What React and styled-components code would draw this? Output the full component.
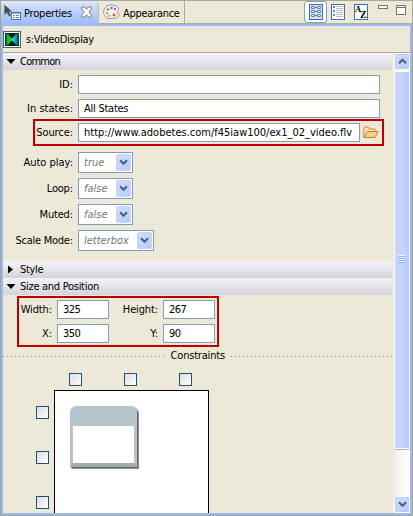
import React from "react";
import styled, { createGlobalStyle } from "styled-components";

const Global = createGlobalStyle`
  * { box-sizing: border-box; }
  html, body { margin: 0; padding: 0; overflow: hidden; }
  svg { display: block; flex: none; }
`;

const Frame = styled.div`
  width: 413px;
  height: 516px;
  display: flex;
  flex-direction: column;
  background: #ece9d8;
  border: 1px solid #a5a292;
  border-top-color: #aca899;
  color: #000;
  font: 11px/15px "DejaVu Sans Condensed", "DejaVu Sans", sans-serif;
  font-stretch: condensed;
  overflow: hidden;
`;

const Text = styled.span`
  white-space: nowrap;
  letter-spacing: ${(p) => p.$track || 0}px;
  margin-right: ${(p) => -(p.$track || 0)}px;
`;

const TabBar = styled.div`
  display: flex;
  height: 25px;
  flex: none;
`;

const ActiveTab = styled.div`
  width: 98px;
  height: 25px;
  display: flex;
  align-items: flex-start;
  padding: 3px 0 0 3px;
  border-top-left-radius: 3px;
  border-top-right-radius: 5px;
  border-right: 1px solid #c0bdae;
  background: linear-gradient(#dce6fb, #bad0fb 45%, #98b8f6);

  span { width: 50px; margin: 2px 7px 0 3px; }
  svg:last-child { margin-top: 2px; }
`;

const TabRest = styled.div`
  flex: 1;
  display: flex;
  align-items: flex-start;
  height: 25px;
  border-bottom: 2px solid #99b9f5;
  box-shadow: inset 0 -1px #b3ae9a;
`;

const Tab = styled.div`
  display: flex;
  width: 86px;
  height: 22px;
  padding: 3px 0 0 4px;
  border-right: 1px solid #aca899;

  span { margin: 2px 0 0 3px; }
`;

const Tools = styled.div`
  display: flex;
  align-items: center;
  flex: 1;
  height: 21px;
  padding-left: 119px;

  > svg:last-child { margin-bottom: 3px; }
`;

const Toggle = styled.div`
  width: 23px;
  height: 22px;
  display: grid;
  place-items: center;
  border: 1px solid #86a3bd;
  border-radius: 3px;
  background: #fff;
  margin: 0 4px 0 0;
`;

const ToolGap = styled.div`
  width: ${(p) => p.$w}px;
  flex: none;
`;

const Panel = styled.div`
  flex: 1;
  min-height: 0;
  display: flex;
  flex-direction: column;
  border: 2px solid #99b9f5;
  border-top: 0;
`;

const Title = styled.div`
  height: 26px;
  flex: none;
  display: flex;
  align-items: center;
  gap: 5px;
`;

const Body = styled.div`
  flex: 1;
  min-height: 0;
  display: flex;
  border-top: 1px solid #aca899;
`;

const Content = styled.div`
  width: 390px;
  overflow: hidden;
  display: flex;
  flex-direction: column;
`;

const Section = styled.div`
  height: 17px;
  flex: none;
  display: flex;
  align-items: center;
  margin-right: 1px;
  background: linear-gradient(#f4f4f7, #e5e4e9 50%, #d5d3dc);

  svg { margin: 0 4px 0 3px; }
`;

const Form = styled.div`
  display: flex;
  flex-direction: column;
  height: 191px;
  flex: none;
  padding-top: 5px;
`;

const Row = styled.div`
  display: flex;
  align-items: center;
  height: ${(p) => p.$h}px;
  margin-bottom: ${(p) => p.$gap || 0}px;
`;

const Label = styled.div`
  width: ${(p) => p.$w}px;
  display: flex;
  justify-content: flex-end;
  flex: none;
  margin-right: 5px;
`;

const SizeLabel = styled.div`
  display: flex;
  justify-content: flex-end;
`;

const Field = styled.div`
  width: ${(p) => p.$w}px;
  height: 19px;
  flex: none;
  padding: 1px 0 0 5px;
  border: 1px solid #7f9db9;
  background: #fff;
`;

const SourceBox = styled.div`
  display: flex;
  align-items: center;
  width: 351px;
  height: 27px;
  flex: none;
  margin: 1px 0 6px 30px;
  border: 2px solid #c00000;

  > svg { margin-left: 3px; }
`;

const Combo = styled.div`
  width: ${(p) => p.$w}px;
  height: 21px;
  flex: none;
  display: flex;
  justify-content: space-between;
  padding: 1px 1px 1px 5px;
  border: 1px solid #7f9db9;
  background: #fff;
  color: #777;
  font-style: italic;

  > span { margin-top: 1px; }
`;

const ArrowButton = styled.div`
  width: ${(p) => p.$w}px;
  height: 17px;
  display: grid;
  place-items: center;
  border: 1px solid ${(p) => (p.$edge ? "#fff" : "#c3d3fd")};
  border-radius: 2px;
  background: linear-gradient(135deg, #d2dffe, #b7cbf9);
  box-shadow: ${(p) => (p.$edge ? "inset 0 0 0 1px #bacdf8" : "none")};
`;

const SizeBox = styled.div`
  display: grid;
  grid-template-columns: 33px 52px 44px 52px;
  grid-auto-rows: 19px;
  gap: 5px 5px;
  align-items: center;
  width: 202px;
  height: 51px;
  flex: none;
  margin: 1px 0 0 14px;
  padding: 2px 0 0 0;
  border: 2px solid #c00000;
`;

const Divider = styled.div`
  display: flex;
  align-items: center;
  height: 17px;
  flex: none;

  > span { width: 55px; margin: 0 6px 0 5px; }
`;

const Dots = styled.div`
  width: ${(p) => p.$w}px;
  height: 1px;
  margin-top: 2px;
  background: repeating-linear-gradient(90deg, #8e8c80 0 1px, transparent 1px 4px);
`;

const Constraints = styled.div`
  display: grid;
  grid-template-columns: 51px 155px;
  grid-template-rows: 26px 1fr;
  flex: 1;
  min-height: 0;
`;

const TopAnchors = styled.div`
  grid-column: 2;
  display: flex;
  gap: 42px;
  padding: 9px 0 0 15px;
`;

const SideAnchors = styled.div`
  display: flex;
  flex-direction: column;
  gap: 32px;
  padding: 16px 0 0 33px;
`;

const Check = styled.div`
  width: 13px;
  height: 13px;
  flex: none;
  border: 1px solid #1c5180;
  background: linear-gradient(135deg, #dcdcd7, #fff);
`;

const Canvas = styled.div`
  border: 1px solid #000;
  border-bottom: 0;
  background: #fff;
  padding: 15px;
`;

const MiniWindow = styled.div`
  width: 67px;
  height: 61px;
  border: 3px solid #b7c4cb;
  border-top-width: 20px;
  border-bottom: 4px solid #a3abae;
  border-radius: 6px 6px 0 0;
  box-shadow: 1px 1px 1px #596064, 2px 2px 1px #8c9296;
`;

const ScrollBar = styled.div`
  width: 17px;
  display: flex;
  flex-direction: column;
  padding-left: 1px;
  background: linear-gradient(90deg, #eeede5, #fff 80%);
`;

const Thumb = styled.div`
  height: 378px;
  display: grid;
  place-items: center;
  border: 1px solid #fff;
  border-radius: 2px;
  background: linear-gradient(90deg, #c8d6fb, #c2d3fd 60%, #b5c9f7);
  box-shadow: 0 1px #a0b5dc;
  margin: 1px 0 auto;

  svg { margin-bottom: 2px; }
`;

const Chevron = ({ up }) => (
  <svg width="9" height="7" viewBox="0 0 9 7">
    <path d={up ? "M1 5.2 4.5 1.8 8 5.2" : "M1 1.3 4.5 4.7 8 1.3"} fill="none" stroke="#4d6185" strokeWidth="2.2" />
  </svg>
);

const PropertiesIcon = () => (
  <svg width="17" height="18" viewBox="0 0 17 18">
    <path d="M.5 1v9.5L3 8.4l2 3.8 1.8-1L5 7.5h3z" fill="#4b4b4b" stroke="#777" strokeWidth=".5" />
    <rect x="7.5" y="8.5" width="9" height="7" fill="#fff" stroke="#4c75a8" />
    <path d="M8 9.5h8" stroke="#8db0da" />
    <path d="M9 11.5h2m1 0h3M9 13.5h2m1 0h3" stroke="#5d83ad" />
  </svg>
);

const CloseIcon = () => (
  <svg width="11" height="12" viewBox="0 0 11 12">
    <path d="M.7 1h3l1.8 2.3L7.3 1h3v2L7.8 6l2.5 3v2h-3L5.5 8.7 3.7 11h-3V9l2.5-3L.7 3z" fill="#fff" stroke="#7b7b7b" />
  </svg>
);

const PaletteIcon = () => (
  <svg width="17" height="16" viewBox="0 0 17 16">
    <path d="M8 1C3.5 1 .7 4.5.7 8S3 14.5 7 14.5h3c3.6 0 6-2 6-3.8 0-1.4-1.7-1-2.2-2-.4-1 2.2-1.6 1.8-3.6C15.2 2.7 12 1 8 1z" fill="#f6f3ee" stroke="#96928e" />
    <circle cx="5" cy="5.5" r="1.2" fill="#52a552" />
    <circle cx="8.5" cy="4" r="1.3" fill="#607bce" />
    <circle cx="12" cy="5" r="1.2" fill="#9a65bd" />
    <circle cx="4" cy="9" r="1.2" fill="#6fabd3" />
    <circle cx="6.3" cy="11.7" r="1.3" fill="#e8a23b" />
    <circle cx="11" cy="11" r="1.5" fill="#e25346" />
  </svg>
);

const FormIcon = () => (
  <svg width="14" height="16" viewBox="0 0 14 16">
    <rect x=".5" y=".5" width="13" height="15" fill="#d5e4f3" stroke="#3f6ea9" />
    <path d="M2.5 2.5h3v2h-3zM8.5 2.5h3v2h-3zM2.5 6.5h3v2h-3zM8.5 6.5h3v2h-3zM2.5 10.5h3v2h-3zM8.5 10.5h3v2h-3z" fill="#eef5fc" stroke="#5d87bb" />
    <path d="M6 3.5h2M6 7.5h2M6 11.5h2" stroke="#5d87bb" />
  </svg>
);

const ListIcon = () => (
  <svg width="14" height="16" viewBox="0 0 14 16">
    <rect x=".5" y=".5" width="13" height="15" fill="#fff" stroke="#426fa9" />
    <path d="M2 3h2M2 7h2M2 11h2" stroke="#5c86bd" strokeWidth="2" />
    <path d="M5 2.5h7M5 4.5h7M5 6.5h7M5 8.5h7M5 10.5h7M5 12.5h7" stroke="#b9bbc2" />
  </svg>
);

const SortIcon = () => (
  <svg width="14" height="16" viewBox="0 0 14 16">
    <rect x=".5" y=".5" width="13" height="15" fill="#fff" stroke="#426fa9" />
    <text x="1" y="8" fontFamily="Liberation Serif, serif" fontWeight="bold" fontSize="8.5">A</text>
    <text x="6" y="14" fontFamily="Liberation Serif, serif" fontWeight="bold" fontSize="10">Z</text>
  </svg>
);

const WindowIcons = () => (
  <svg width="29" height="11" viewBox="0 0 29 11">
    <rect x=".5" y=".5" width="9" height="3" fill="#fff" stroke="#77736b" />
    <rect x="18.5" y=".5" width="9" height="9" fill="#fff" stroke="#77736b" />
    <path d="M18 2.5h10" stroke="#77736b" />
  </svg>
);

const VideoIcon = () => (
  <svg width="18" height="17" viewBox="0 0 18 17">
    <defs>
      <linearGradient id="videoFill">
        <stop stopColor="#07732c" />
        <stop offset=".2" stopColor="#0bd319" />
        <stop offset=".4" stopColor="#0cce48" />
        <stop offset=".62" stopColor="#26dce0" />
        <stop offset="1" stopColor="#075a72" />
      </linearGradient>
    </defs>
    <rect x=".5" y=".5" width="17" height="16" fill="#f6fbfa" stroke="#476670" />
    <rect x="2" y="2" width="14" height="13" fill="#062c2c" />
    <rect x="3" y="3" width="12" height="11" fill="url(#videoFill)" />
    <path d="M5 3h8l-3 4H8zM5 14h8l-3-4H8z" fill="#041d1d" />
  </svg>
);

const FolderIcon = () => (
  <svg width="16" height="13" viewBox="0 0 16 13">
    <path d="M.8 11V2.5L2 1h3l1.5 2H12v3" fill="#fbe6b2" stroke="#ca8935" />
    <path d="M1 11.5 4.2 5.5h11l-3.1 6z" fill="#fbd283" stroke="#c68025" />
  </svg>
);

const Triangle = ({ open }) => (
  <svg width="10" height="9" viewBox="0 0 10 9">
    <path d={open ? "M.5 2h9L5 7z" : "M2 .5v8L7 4.5z"} />
  </svg>
);

const SelectRow = ({ label, value, width = 55, track }) => (
  <Row $h={21} $gap={5}>
    <Label $w={70}><Text $track={track}>{label}</Text></Label>
    <Combo $w={width}>
      <Text>{value}</Text>
      <ArrowButton $w={15}><Chevron /></ArrowButton>
    </Combo>
  </Row>
);

const Size = ({ label, value }) => (
  <>
    <SizeLabel><Text $track={-0.15}>{label}</Text></SizeLabel>
    <Field $w={52}><Text $track={-0.5}>{value}</Text></Field>
  </>
);

export default function App() {
  return (
    <>
      <Global />
      <Frame>
        <TabBar>
          <ActiveTab><PropertiesIcon /><Text $track={-0.2}>Properties</Text><CloseIcon /></ActiveTab>
          <TabRest>
            <Tab><PaletteIcon /><Text $track={-0.28}>Appearance</Text></Tab>
            <Tools>
              <Toggle><FormIcon /></Toggle>
              <ListIcon />
              <ToolGap $w={9} />
              <SortIcon />
              <ToolGap $w={10} />
              <WindowIcons />
            </Tools>
          </TabRest>
        </TabBar>
        <Panel>
          <Title><VideoIcon /><Text $track={-0.35}>s:VideoDisplay</Text></Title>
          <Body>
            <Content>
              <Section><Triangle open /><Text $track={-0.75}>Common</Text></Section>
              <Form>
                <Row $h={19} $gap={5}><Label $w={70}><Text>ID:</Text></Label><Field $w={302} /></Row>
                <Row $h={19}><Label $w={70}><Text>In states:</Text></Label><Field $w={302}><Text $track={-0.25}>All States</Text></Field></Row>
                <SourceBox>
                  <Label $w={38}><Text $track={-0.1}>Source:</Text></Label>
                  <Field $w={282}><Text>http://www.adobetes.com/f45iaw100/ex1_02_video.flv</Text></Field>
                  <FolderIcon />
                </SourceBox>
                <SelectRow label="Auto play:" value="true" />
                <SelectRow label="Loop:" value="false" track={-0.2} />
                <SelectRow label="Muted:" value="false" track={-0.2} />
                <SelectRow label="Scale Mode:" value="letterbox" width={76} track={-0.25} />
              </Form>
              <Section><Triangle /><Text $track={-0.3}>Style</Text></Section>
              <Section><Triangle open /><Text $track={-0.28}>Size and Position</Text></Section>
              <SizeBox>
                <Size label="Width:" value="325" />
                <Size label="Height:" value="267" />
                <Size label="X:" value="350" />
                <Size label="Y:" value="90" />
              </SizeBox>
              <Divider><Dots $w={163} /><Text $track={-0.2}>Constraints</Text><Dots $w={162} /></Divider>
              <Constraints>
                <TopAnchors><Check /><Check /><Check /></TopAnchors>
                <SideAnchors><Check /><Check /><Check /></SideAnchors>
                <Canvas><MiniWindow /></Canvas>
              </Constraints>
            </Content>
            <ScrollBar>
              <ArrowButton $w={16} $edge><Chevron up /></ArrowButton>
              <Thumb>
                <svg width="8" height="8" viewBox="0 0 8 8"><path d="M0 .5h7M0 2.5h7M0 4.5h7M0 6.5h7" stroke="#eef4fe" /><path d="M0 1.5h7M0 3.5h7M0 5.5h7M0 7.5h7" stroke="#8cb0f8" /></svg>
              </Thumb>
              <ArrowButton $w={16} $edge><Chevron /></ArrowButton>
            </ScrollBar>
          </Body>
        </Panel>
      </Frame>
    </>
  );
}
